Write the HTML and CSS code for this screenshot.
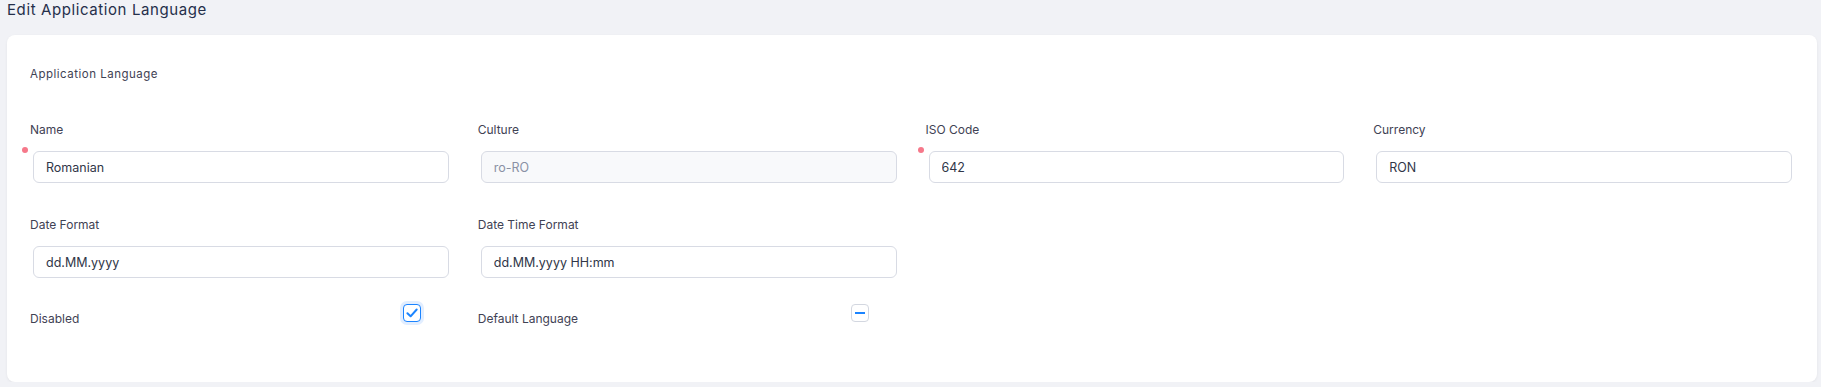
FILE: index.html
```html
<!DOCTYPE html>
<html lang="en">
<head>
    <meta charset="UTF-8">
    <meta name="viewport" content="width=device-width, initial-scale=1.0">
    <title>Edit Application Language</title>
    <link rel="stylesheet" href="styles.css">
</head>
<body>
    <h1 class="page-title">Edit Application Language</h1>

    <div class="card">
        <h2 class="section-title">Application Language</h2>

        <div class="form-grid">
            <div class="field">
                <label for="name">Name</label>
                <div class="control required">
                    <input type="text" id="name" value="Romanian">
                </div>
            </div>
            <div class="field">
                <label for="culture">Culture</label>
                <div class="control">
                    <input type="text" id="culture" value="ro-RO" disabled>
                </div>
            </div>
            <div class="field">
                <label for="isoCode">ISO Code</label>
                <div class="control required">
                    <input type="text" id="isoCode" value="642">
                </div>
            </div>
            <div class="field">
                <label for="currency">Currency</label>
                <div class="control">
                    <input type="text" id="currency" value="RON">
                </div>
            </div>

            <div class="field">
                <label for="dateFormat">Date Format</label>
                <div class="control">
                    <input type="text" id="dateFormat" value="dd.MM.yyyy">
                </div>
            </div>
            <div class="field">
                <label for="dateTimeFormat">Date Time Format</label>
                <div class="control">
                    <input type="text" id="dateTimeFormat" value="dd.MM.yyyy HH:mm">
                </div>
            </div>
            <div class="field empty"></div>
            <div class="field empty"></div>

            <!-- Checkbox rows -->
            <div class="check-field">
                <span class="check-label">Disabled</span>
                <span class="check checked">
                    <svg width="14" height="14" viewBox="0 0 14 14"><path d="M2.4 7.2 L5.6 10.3 L11.7 3.5" fill="none" stroke="#1b84ff" stroke-width="2" stroke-linecap="round" stroke-linejoin="round"/></svg>
                </span>
            </div>
            <div class="check-field">
                <span class="check-label">Default Language</span>
                <span class="check indeterminate"><span class="dash"></span></span>
            </div>
        </div>
    </div>
</body>
</html>
```

FILE: styles.css
```css
body {
    font-family: Inter, "Noto Sans", Arial, sans-serif;
    margin: 0;
    padding: 0 4px 0 7px;
    background-color: #f1f2f6;
    color: #3f4254;
}
.page-title {
    margin: 0 0 15px;
    font-size: 15px;
    line-height: 20px;
    font-weight: 400;
    letter-spacing: 0.6px;
    color: #252f4a;
}
.card {
    background: #fff;
    border-radius: 8px;
    box-shadow: 0 1px 3px rgba(0, 0, 0, 0.06);
    padding: 30px 25px 54px 23px;
    height: 347px;
    box-sizing: border-box;
}
.section-title {
    margin: 0 0 38px;
    font-size: 11.5px;
    line-height: 18px;
    font-weight: 400;
    letter-spacing: 0.5px;
    color: #3f4254;
}
.form-grid {
    display: grid;
    grid-template-columns: repeat(4, 1fr);
    column-gap: 29px;
    row-gap: 33px;
}
.field label {
    display: block;
    font-size: 12px;
    line-height: 18px;
    color: #3f4254;
    margin-bottom: 12px;
}
.control {
    position: relative;
    padding-left: 3px;
}
.control.required::before {
    content: "";
    position: absolute;
    left: -8px;
    top: -4px;
    width: 6px;
    height: 6px;
    border-radius: 50%;
    background: #f6788a;
}
input[type="text"] {
    display: block;
    width: 100%;
    height: 32px;
    box-sizing: border-box;
    padding: 0 12px;
    border: 1px solid #d8dbe4;
    border-radius: 6px;
    font-family: inherit;
    font-size: 12.5px;
    color: #303648;
    background: #fff;
    outline: none;
}
input[type="text"]:disabled {
    background: #f8f9fb;
    color: #8a91a5;
}
.check-field {
    display: flex;
    justify-content: space-between;
    align-items: flex-start;
    padding-right: 28px;
    margin-top: -7px;
}
.check-label {
    font-size: 12px;
    line-height: 18px;
    margin-top: 6px;
    color: #3f4254;
}
.check {
    width: 18px;
    height: 18px;
    box-sizing: border-box;
    border-radius: 4px;
    display: flex;
    align-items: center;
    justify-content: center;
    background: #fff;
}
.check.checked {
    border: 1.5px solid #1b84ff;
    box-shadow: 0 0 0 3px #e2eeff;
}
.check.indeterminate {
    border: 1px solid #d3d7e0;
}
.check .dash {
    width: 10px;
    height: 2px;
    background: #1b84ff;
}
```
